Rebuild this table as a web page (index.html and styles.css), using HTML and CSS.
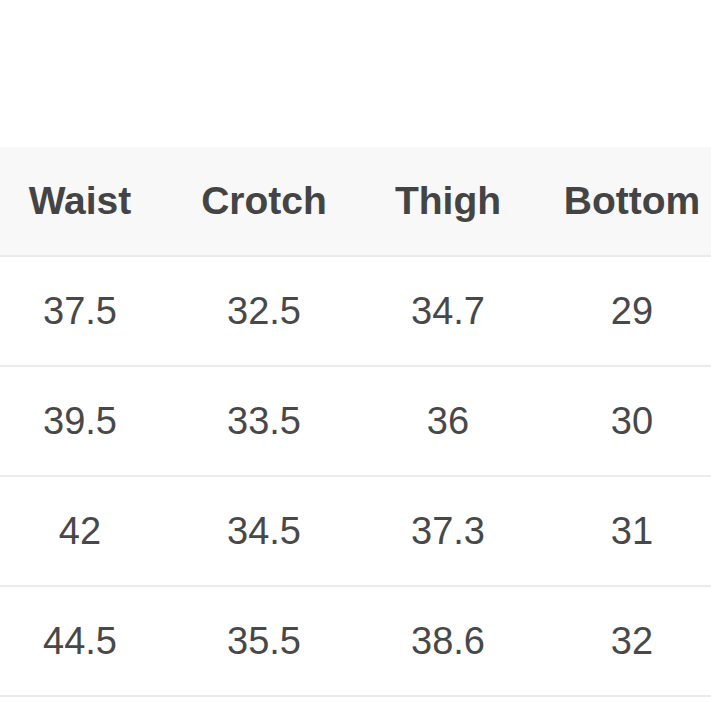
FILE: index.html
```html
<!DOCTYPE html>
<html>
<head>
<meta charset="utf-8">
<link rel="stylesheet" href="styles.css">
</head>
<body>
<div class="page">
  <div class="table">
    <div class="row head">
      <div class="cell">Waist</div>
      <div class="cell">Crotch</div>
      <div class="cell">Thigh</div>
      <div class="cell">Bottom</div>
    </div>
    <div class="row">
      <div class="cell">37.5</div>
      <div class="cell">32.5</div>
      <div class="cell">34.7</div>
      <div class="cell">29</div>
    </div>
    <div class="row">
      <div class="cell">39.5</div>
      <div class="cell">33.5</div>
      <div class="cell">36</div>
      <div class="cell">30</div>
    </div>
    <div class="row">
      <div class="cell">42</div>
      <div class="cell">34.5</div>
      <div class="cell">37.3</div>
      <div class="cell">31</div>
    </div>
    <div class="row">
      <div class="cell">44.5</div>
      <div class="cell">35.5</div>
      <div class="cell">38.6</div>
      <div class="cell">32</div>
    </div>
  </div>
</div>
</body>
</html>
```

FILE: styles.css
```css
html, body {
  margin: 0;
  padding: 0;
  background: #ffffff;
  overflow: hidden;
}
.page {
  width: 711px;
  height: 711px;
  overflow: hidden;
  padding-top: 147px;
  box-sizing: border-box;
  font-family: "Liberation Sans", Arial, sans-serif;
  color: #484848;
}
.table {
  margin-left: -12px;
  width: 736px;
}
.row {
  display: grid;
  grid-template-columns: repeat(4, 184px);
  height: 108px;
  border-bottom: 2px solid #ebebeb;
  font-size: 38px;
}
.row.head {
  background: #f8f8f8;
  font-weight: bold;
  font-size: 39px;
  color: #444444;
}
.cell {
  display: flex;
  align-items: center;
  justify-content: center;
}
```
